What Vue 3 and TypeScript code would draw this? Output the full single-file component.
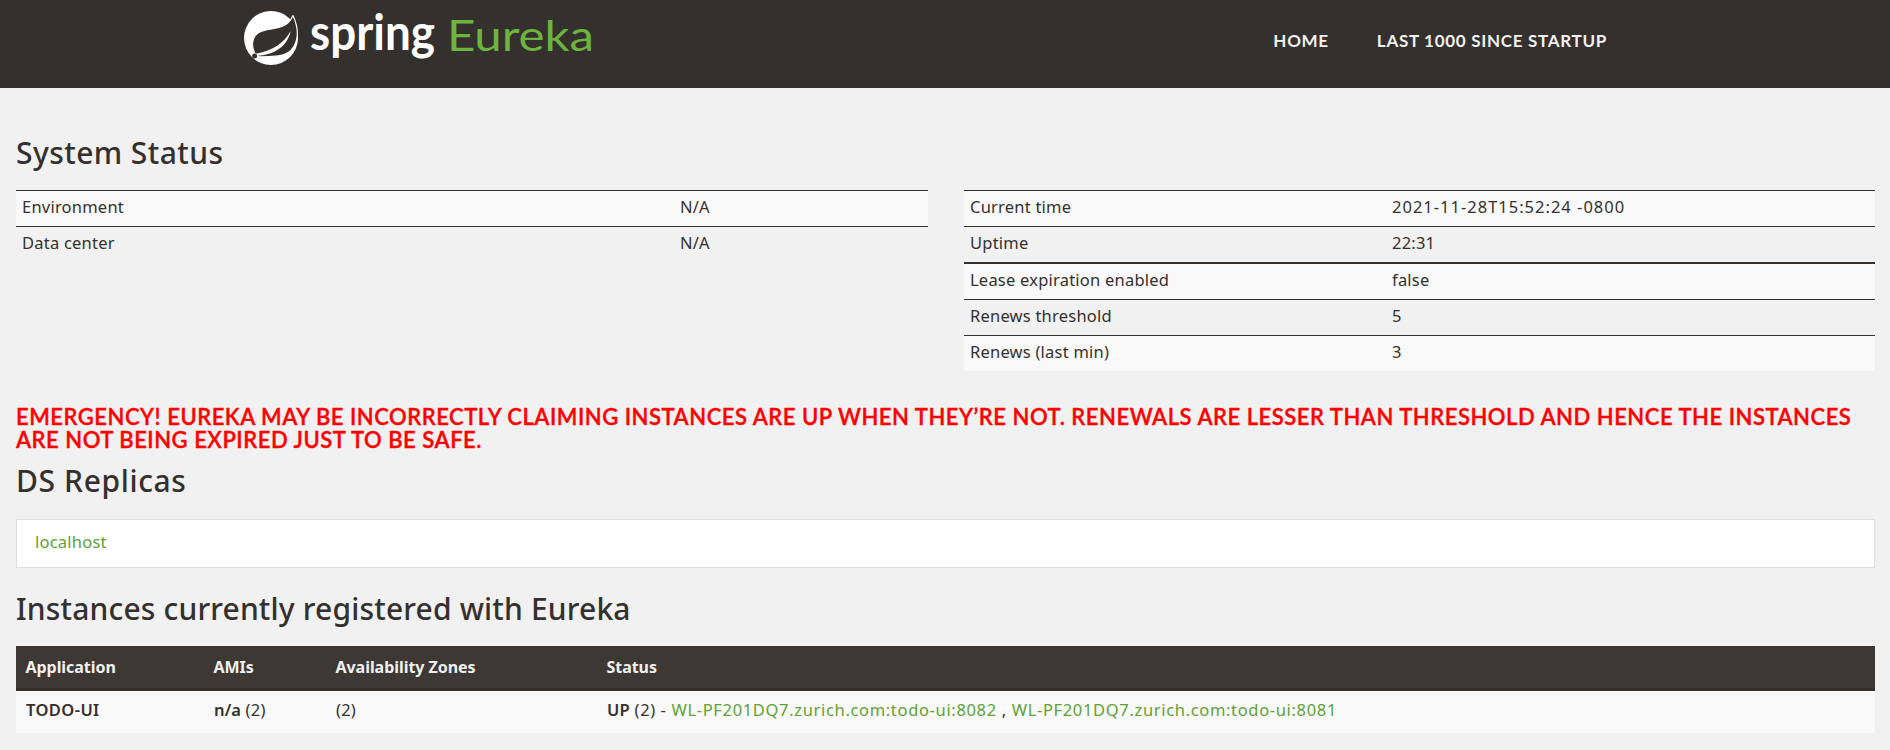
<script setup lang="ts">
interface StatusRow {
  label: string
  value: string
  kind?: string
}

const navLinks: string[] = ['Home', 'Last 1000 since startup']

const environment: StatusRow[] = [
  { label: 'Environment', value: 'N/A' },
  { label: 'Data center', value: 'N/A' },
]

const timing: StatusRow[] = [
  { label: 'Current time', value: '2021-11-28T15:52:24 -0800', kind: 'stamp' },
  { label: 'Uptime', value: '22:31' },
  { label: 'Lease expiration enabled', value: 'false' },
  { label: 'Renews threshold', value: '5' },
  { label: 'Renews (last min)', value: '3' },
]

const instances: string[] = [
  'WL-PF201DQ7.zurich.com:todo-ui:8082',
  'WL-PF201DQ7.zurich.com:todo-ui:8081',
]
</script>

<template>
  <div class="page">
    <header class="navbar">
      <a class="brand" href="#">
        <svg width="352" height="70" viewBox="0 0 352 70" role="img" aria-label="spring Eureka">
          <g transform="translate(1 11)">
            <circle cx="27" cy="27" r="27" fill="#fff" />
            <path
              class="leaf"
              d="M49 4.5C46.5 10 43.5 13.5 38 15.5C30 18.5 21 17.5 14 22C7.500 26.500 7.300 35 10.500 42L15 45.700C30 46 41 45.500 47 39.500C55.500 30 54.500 17 49 4.500Z"
            />
            <path d="M46.700 20C40 32 29 39.500 12 42.800L13 44.800C30 44 43 36 46.700 20Z" fill="#fff" />
            <circle cx="10.600" cy="45" r="2.500" fill="#34302d" />
          </g>
          <text class="word spring" x="67" y="50" textLength="125" lengthAdjust="spacingAndGlyphs">spring</text>
          <text class="word eureka" x="204" y="50.500" textLength="147" lengthAdjust="spacingAndGlyphs">Eureka</text>
        </svg>
      </a>
      <nav class="menu">
        <a v-for="link in navLinks" :key="link" href="#">{{ link }}</a>
      </nav>
    </header>

    <main class="content">
      <h1 class="system">System Status</h1>
      <div class="columns">
        <table class="status env">
          <tbody>
            <tr v-for="row in environment" :key="row.label">
              <td>{{ row.label }}</td>
              <td>{{ row.value }}</td>
            </tr>
          </tbody>
        </table>
        <table class="status timing">
          <tbody>
            <tr v-for="row in timing" :key="row.label">
              <td>{{ row.label }}</td>
              <td :class="row.kind">{{ row.value }}</td>
            </tr>
          </tbody>
        </table>
      </div>

      <h4 class="alert">
        Emergency! Eureka may be incorrectly claiming instances are up when they’re not. Renewals are lesser than
        threshold and hence the instances are not being expired just to be safe.
      </h4>

      <h1 class="replicas">DS Replicas</h1>
      <ul class="list"><li><a href="#">localhost</a></li></ul>

      <h1 class="registered">Instances currently registered with Eureka</h1>
      <table class="apps">
        <colgroup><col class="c1" /><col class="c2" /><col class="c3" /><col /></colgroup>
        <thead>
          <tr><th>Application</th><th>AMIs</th><th>Availability Zones</th><th>Status</th></tr>
        </thead>
        <tbody>
          <tr>
            <td><b class="app-name">TODO-UI</b></td>
            <td><b>n/a</b> (2)</td>
            <td>(2)</td>
            <td>
              <b>UP</b> (2) -
              <template v-for="(name, i) in instances" :key="name"><span v-if="i"> , </span><a class="instance" href="#">{{ name }}</a></template>
            </td>
          </tr>
        </tbody>
      </table>
    </main>
  </div>
</template>

<style>
body {
  margin: 0;
  background: #f1f1f1;
}
</style>

<style scoped>
.page {
  height: 750px;
  overflow: hidden;
  background: #f1f1f1;
  color: #34302d;
  font: 16.5px/24px "Noto Sans", "Open Sans", sans-serif;
  letter-spacing: 0.22px;
}
a {
  color: #5fa134;
  text-decoration: none;
}
.navbar {
  display: flex;
  justify-content: space-between;
  height: 88px;
  padding: 0 283px 0 243px;
  background: #34302d;
}
.brand svg {
  display: block;
}
.leaf {
  fill: #34302d;
  stroke: #fff;
  stroke-width: 1.2;
  stroke-linejoin: round;
}
.word {
  font-family: Lato, sans-serif;
  letter-spacing: 0;
}
.spring {
  fill: #fff;
  font-size: 49px;
  font-weight: 700;
}
.eureka {
  fill: #6db33f;
  font-size: 42px;
  font-weight: 400;
}
.menu {
  display: flex;
  gap: 48px;
  padding-top: 29px;
}
.menu a {
  color: #f1f1f1;
  font: 700 17px/24px Lato, sans-serif;
  letter-spacing: 0.7px;
  text-transform: uppercase;
}
.content {
  padding: 0 15px 0 16px;
}
h1 {
  margin: 0;
  font-size: 30px;
  font-weight: 500;
  line-height: 33px;
}
.system {
  padding-top: 48px;
  margin-bottom: 21px;
  letter-spacing: 0.43px;
}
.columns {
  display: grid;
  grid-template-columns: 912px 911px;
  gap: 36px;
  align-items: start;
}
table {
  border-collapse: separate;
  border-spacing: 0;
  table-layout: fixed;
  width: 100%;
}
.status td {
  box-sizing: content-box;
  height: 31px;
  padding: 0 6px 4px;
  border-top: 1px solid #34302d;
}
.status tr:nth-child(odd) td {
  background: #f9f9f9;
}
.env td:first-child {
  width: 646px;
}
.timing td:first-child {
  width: 410px;
}
.timing tr:nth-child(3) td {
  border-top-width: 2px;
}
.status .stamp {
  letter-spacing: 1px;
}
.alert {
  margin: 34px 0 13px;
  color: #f00;
  font: 600 22px/23px Lato, sans-serif;
  letter-spacing: 0.52px;
  text-transform: uppercase;
  -webkit-text-stroke: 0.35px #f00;
}
.replicas {
  letter-spacing: 0.62px;
}
.list {
  height: 47px;
  margin: 22px 0 24px;
  padding: 0;
  border: 1px solid #ddd;
  background: #fff;
  list-style: none;
}
.list li {
  padding: 10px 18px;
}
.registered {
  letter-spacing: 0.17px;
}
.apps {
  margin-top: 21px;
}
.c1 {
  width: 188px;
}
.c2 {
  width: 122px;
}
.c3 {
  width: 271px;
}
.apps th {
  height: 42px;
  padding: 0 10px 0 9.5px;
  border-bottom: 3px solid #34302d;
  background: #3d3833;
  color: #f1f1f1;
  font-size: 16px;
  font-weight: 700;
  letter-spacing: -0.05px;
  text-align: left;
}
.apps td {
  height: 38px;
  padding: 0 10px 4px;
  background: #f9f9f9;
}
.apps td:last-child {
  letter-spacing: 0.6px;
}
.apps b {
  font-weight: 600;
  letter-spacing: 0.1px;
}
.apps .app-name {
  letter-spacing: 0.4px;
}
.apps .instance {
  letter-spacing: 0.66px;
}
</style>
